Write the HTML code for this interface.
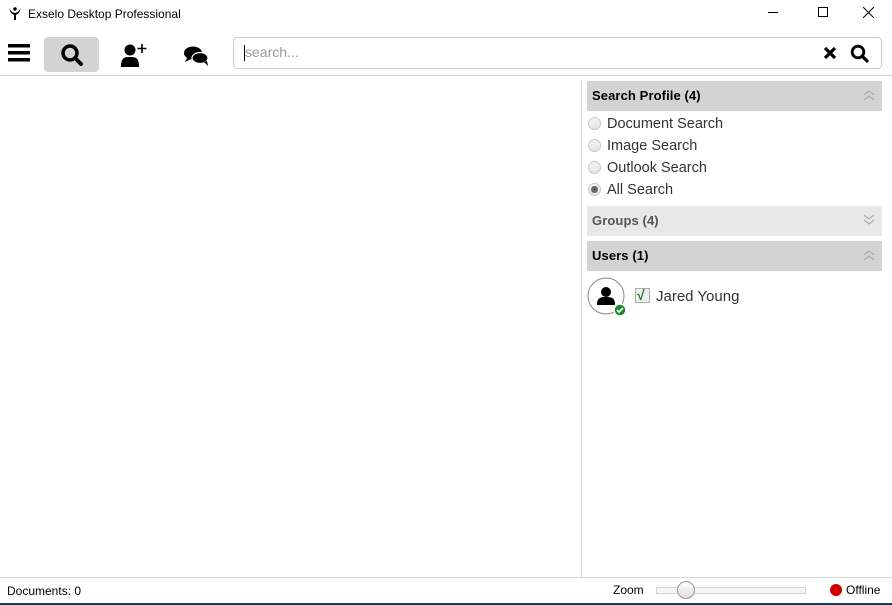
<!DOCTYPE html>
<html><head><style>
*{margin:0;padding:0;box-sizing:border-box}
body{width:892px;height:605px;background:#fff;font-family:"Liberation Sans",sans-serif;position:relative;overflow:hidden;color:#000}
.a{position:absolute}
.hdr{position:absolute;left:587px;width:295px;font-weight:bold;font-size:13px;padding-left:5px;line-height:30px;letter-spacing:0.1px}
.rad{position:absolute;left:588px;width:13px;height:13px;border-radius:50%;border:1px solid #c8c8c8;background:linear-gradient(#f4f4f4,#e4e4e4)}
.rl{position:absolute;left:607px;font-size:14.5px;color:#333}
</style></head><body>
<svg class="a" style="left:8px;top:6px" width="14" height="15" viewBox="0 0 14 15"><circle cx="7" cy="3" r="1.7"/><path d="M1 2l3 4 3 1 3-1 3-4-2 5-3 2v5H6V9L3 7z"/></svg>
<div class="a" style="left:28px;top:7px;font-size:12px">Exselo Desktop Professional</div>
<div class="a" style="left:768px;top:12px;width:10px;height:1px;background:#000"></div>
<div class="a" style="left:818px;top:7px;width:10px;height:10px;border:1px solid #000"></div>
<svg class="a" style="left:863px;top:7px" width="11" height="11"><path d="M0 0L11 11M11 0L0 11" stroke="#000"/></svg>
<svg class="a" style="left:8px;top:44px" width="22" height="18"><rect y="0" width="22" height="3.5"/><rect y="7" width="22" height="3.5"/><rect y="14" width="22" height="3.5"/></svg>
<div class="a" style="left:44px;top:37px;width:55px;height:35px;background:#d3d3d3;border-radius:4px"></div>
<svg class="a" style="left:60px;top:44px" width="24" height="22"><circle cx="10" cy="9" r="7" fill="none" stroke="#000" stroke-width="3.5"/><path d="M15 14l6 6" stroke="#000" stroke-width="4" stroke-linecap="round"/></svg>
<svg class="a" style="left:120px;top:42px" width="28" height="26"><circle cx="10" cy="8" r="5.5"/><path d="M1 25c0-9 3-10 9-10s9 1 9 10z"/><path d="M22 2v9M17.5 6.5h9" stroke="#000" stroke-width="1.6"/></svg>
<svg class="a" style="left:183px;top:45px" width="27" height="22"><ellipse cx="10" cy="8" rx="9" ry="6.5"/><path d="M4 13l-2 4 6-3z"/><ellipse cx="17" cy="13" rx="8" ry="5.5" fill="#000" stroke="#fff" stroke-width="1.2"/><path d="M21 17l4 4-1-5z"/></svg>
<div class="a" style="left:233px;top:37px;width:649px;height:32px;border:1px solid #ccc;border-radius:4px"></div>
<div class="a" style="left:244px;top:45px;width:1px;height:16px;background:#000"></div>
<div class="a" style="left:245px;top:44px;font-size:14px;color:#999">search...</div>
<svg class="a" style="left:823px;top:46px" width="14" height="14"><path d="M2 2l10 10M12 2L2 12" stroke="#000" stroke-width="3.2"/></svg>
<svg class="a" style="left:850px;top:44px" width="20" height="19"><circle cx="8" cy="8" r="5.8" fill="none" stroke="#000" stroke-width="2.8"/><path d="M12 12l5 5" stroke="#000" stroke-width="3.2" stroke-linecap="round"/></svg>
<div class="a" style="left:0;top:75px;width:892px;height:1px;background:#d5d5d5"></div>
<div class="a" style="left:581px;top:80px;width:1px;height:497px;background:#d5d5d5"></div>
<div class="hdr" style="top:81px;background:#d3d3d3">Search Profile (4)</div>
<div class="rad" style="top:117px"></div><div class="rl" style="top:116px">Document Search</div>
<div class="rad" style="top:139px"></div><div class="rl" style="top:138px">Image Search</div>
<div class="rad" style="top:161px"></div><div class="rl" style="top:160px">Outlook Search</div>
<div class="rad" style="top:183px"></div><div class="a" style="left:591px;top:186px;width:7px;height:7px;border-radius:50%;background:#666"></div><div class="rl" style="top:182px">All Search</div>
<div class="hdr" style="top:206px;background:#e8e8e8;color:#555">Groups (4)</div>
<div class="hdr" style="top:241px;background:#d3d3d3">Users (1)</div>
<svg class="a" style="left:862px;top:89px" width="14" height="12"><path d="M2 6l5-4 5 4M2 11l5-4 5 4" fill="none" stroke="#aaa" stroke-width="1.2"/></svg>
<svg class="a" style="left:862px;top:214px" width="14" height="12"><path d="M2 1l5 4 5-4M2 6l5 4 5-4" fill="none" stroke="#aaa" stroke-width="1.2"/></svg>
<svg class="a" style="left:862px;top:249px" width="14" height="12"><path d="M2 6l5-4 5 4M2 11l5-4 5 4" fill="none" stroke="#aaa" stroke-width="1.2"/></svg>
<svg class="a" style="left:587px;top:277px" width="42" height="42"><circle cx="19" cy="19" r="18" fill="#fff" stroke="#888"/><circle cx="19" cy="15" r="5"/><path d="M10 28c0-7 3-8 9-8s9 1 9 8z"/><circle cx="33" cy="33" r="6" fill="#1a8a2a" stroke="#fff" stroke-width="1.5"/><path d="M30 33l2 2 4-4" stroke="#fff" stroke-width="1.8" fill="none"/></svg>
<div class="a" style="left:635px;top:288px;width:15px;height:15px;border:1px solid #aaa;background:#eee"></div>
<div class="a" style="left:637px;top:287px;font-size:14px;color:#1a7a1a;font-weight:bold">√</div>
<div class="a" style="left:656px;top:288px;font-size:15px;color:#333">Jared Young</div>
<div class="a" style="left:0;top:577px;width:892px;height:1px;background:#d5d5d5"></div>
<div class="a" style="left:7px;top:584px;font-size:12px">Documents: 0</div>
<div class="a" style="left:613px;top:583px;font-size:12px">Zoom</div>
<div class="a" style="left:656px;top:587px;width:150px;height:7px;border:1px solid #d5d5d5;background:#f5f5f5"></div>
<div class="a" style="left:677px;top:581px;width:18px;height:18px;border-radius:50%;border:1px solid #999;background:linear-gradient(#fff,#ddd)"></div>
<div class="a" style="left:830px;top:584px;width:12px;height:12px;border-radius:50%;background:#d00000"></div>
<div class="a" style="left:846px;top:583px;font-size:12px">Offline</div>
<div class="a" style="left:0;top:603px;width:892px;height:2px;background:#1b3a5a"></div>
</body></html>
